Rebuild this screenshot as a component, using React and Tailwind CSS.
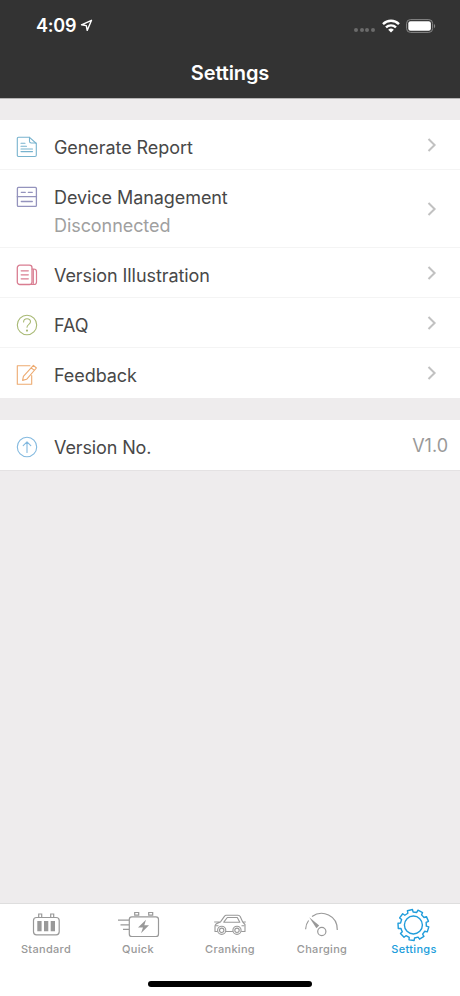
import React from "react";

const gearPath = (() => {
  const teeth = 9;
  const step = (Math.PI * 2) / teeth;
  const points = [];
  for (let i = 0; i < teeth; i++) {
    const a = i * step - Math.PI / 2 - 0.23;
    [
      [-0.3, 13],
      [-0.24, 15.5],
      [0.24, 15.5],
      [0.3, 13],
    ].forEach(([t, r]) => {
      const angle = a + t * step;
      points.push(
        `${(16.4 + r * Math.cos(angle)).toFixed(2)} ${(17 + r * Math.sin(angle)).toFixed(2)}`
      );
    });
  }
  return `M${points.join("L")}Z`;
})();

const RowIcon = ({ color, children }) => (
  <svg
    className="w-[22px] h-[22px] shrink-0"
    viewBox="0 0 22 22"
    fill="none"
    stroke={color}
    strokeWidth="1.1"
    strokeLinecap="round"
    strokeLinejoin="round"
  >
    {children}
  </svg>
);

const ReportIcon = () => (
  <RowIcon color="#78b3ce">
    <path d="M2.5 1.3H13.5L20.3 7.5V19.3Q20.3 20.5 19 20.5H2.5Q1.3 20.5 1.3 19.3V2.5Q1.3 1.3 2.5 1.3Z" />
    <path d="M13.5 1.3V5.3Q13.5 7 15.2 7H20M5 7.3H9M5 10.3H10.5M5 13H16.5M5 15.6H16.5" />
  </RowIcon>
);

const DeviceIcon = () => (
  <RowIcon color="#9493bd">
    <rect x="1.4" y="1.4" width="19" height="19" rx="1" strokeWidth="1.3" />
    <path d="M1.3 10.7H20.5M5.3 6.3H9.3M12.3 6.3H16.3M5.3 15.5H16.3" strokeWidth="1.3" />
  </RowIcon>
);

const VersionIcon = () => (
  <RowIcon color="#d97d91">
    <rect x="1.3" y="1.2" width="14.7" height="19.3" rx="2.6" strokeWidth="1.3" />
    <path d="M16 5H17.8Q20.5 5 20.5 7.7V18Q20.5 20.5 18 20.5H13.5M17.3 5V19.5" strokeWidth="1.2" />
    <path d="M5.2 6.8H12.3M5.2 10.8H12.3M5.2 14.8H12.3" strokeWidth="1.3" />
  </RowIcon>
);

const FaqIcon = () => (
  <RowIcon color="#a8b974">
    <circle cx="11" cy="11" r="9.7" />
    <path d="M7.6 8C7.6 5.7 9.1 4.7 11 4.7C13 4.7 14.5 5.8 14.5 7.8C14.5 10.4 11 10.3 11 13.3" />
    <circle cx="11" cy="16.6" r=".55" fill="#a8b974" />
  </RowIcon>
);

const FeedbackIcon = () => (
  <RowIcon color="#edaa70">
    <path d="M14 1.8H1.3V20.2H15.7V11.5" />
    <path d="M17.4 1.3L20.4 4L10.6 15.3L6.6 16.4L7.4 12.4ZM15.3 3.8L18.3 6.4" />
  </RowIcon>
);

const UpIcon = () => (
  <RowIcon color="#83b9df">
    <circle cx="11" cy="11" r="9.7" />
    <path d="M11 16.5V6M7.2 9.6L11 5.8L14.8 9.6" />
  </RowIcon>
);

const rows = [
  { label: "Generate Report", icon: ReportIcon },
  { label: "Device Management", icon: DeviceIcon, note: "Disconnected" },
  { label: "Version Illustration", icon: VersionIcon },
  { label: "FAQ", icon: FaqIcon },
  { label: "Feedback", icon: FeedbackIcon },
];

const StandardIcon = () => (
  <svg className="w-[44px] h-[34px]" viewBox="0 0 44 34" fill="none" stroke="#999" strokeWidth="1.2">
    <rect x="9.5" y="9.5" width="25.7" height="17.3" rx="3" />
    <path d="M14.7 9V6H17.7V9M26.7 9V6H29.7V9" />
    <path d="M13.3 13H17.6V23.3H13.3ZM20 13H24.3V23.3H20ZM26.7 13H31V23.3H26.7Z" fill="#999" stroke="none" />
  </svg>
);

const QuickIcon = () => (
  <svg className="w-[44px] h-[34px]" viewBox="0 0 44 34" fill="none" stroke="#999" strokeWidth="1.2">
    <rect x="13.3" y="8.8" width="29.2" height="19.7" rx="2.6" />
    <path d="M18.7 7.2V4.5H22.7V7.2ZM32.7 7.2V4.5H36.7V7.2ZM2 12.2H13M4.5 16.8H13M7 21.3H13" />
    <path d="M30 11.7L22 19.5H27L25 25.3L33 17.2H28.3Z" fill="#999" stroke="none" />
  </svg>
);

const CrankingIcon = () => (
  <svg className="w-[44px] h-[34px]" viewBox="0 0 44 34" fill="none" stroke="#999" strokeWidth="1.1" strokeLinejoin="round">
    <path d="M9.6 23.5H7V18.5Q7 16 9.5 15.2L12.5 13.9L16.4 8.4Q17 7.3 18.3 7.3H30Q31.5 7.3 32.2 8.6L34.8 14.2L37 16.5V23.5H33.2M17.9 23.5H24.9M6.2 14H12M34.5 14H37.8" />
    <path d="M15.8 14.2L19.3 9.5H29.3L31.8 14.2ZM7.5 17.8H10.5M33.5 17.8H36.5" />
    <circle cx="13.7" cy="22.3" r="4.1" />
    <circle cx="13.7" cy="22.3" r="2.2" />
    <circle cx="29" cy="22.3" r="4.1" />
    <circle cx="29" cy="22.3" r="2.2" />
  </svg>
);

const ChargingIcon = () => (
  <svg className="w-[44px] h-[34px]" viewBox="0 0 44 34" fill="none" stroke="#999" strokeWidth="1.2">
    <path d="M5.6 21.3C5.7 18 6.7 15 8.6 12.5M12 8.6C22 1.2 37.6 7.2 37.3 22" />
    <circle cx="21.8" cy="23.5" r="4.1" />
    <path d="M9.2 9.2L19.2 17.4L16.4 20.2Z" fill="#999" stroke="none" />
  </svg>
);

const GearIcon = () => (
  <svg className="w-[34px] h-[34px]" viewBox="0 0 34 34" fill="none" stroke="#209ddb" strokeWidth="1.4" strokeLinejoin="round">
    <path d={gearPath} />
    <circle cx="16.4" cy="17" r="9" />
  </svg>
);

const tabs = [
  { label: "Standard", icon: StandardIcon },
  { label: "Quick", icon: QuickIcon },
  { label: "Cranking", icon: CrankingIcon },
  { label: "Charging", icon: ChargingIcon },
  { label: "Settings", icon: GearIcon, active: true },
];

const StatusBar = () => (
  <div className="flex h-[50px] items-center justify-between pl-9 pr-[24px] pt-[1px]">
    <div className="flex items-center gap-[4px]">
      <span className="text-[18px] leading-[20px] pt-[1px] font-semibold tracking-[-0.2px]">4:09</span>
      <svg className="w-[13px] h-[13px]" viewBox="0 0 13 13" fill="none" stroke="white" strokeWidth="1.4" strokeLinejoin="round">
        <path d="M11.5 1.3L1.5 5.8L6.3 6.6L7.2 11.4Z" />
      </svg>
    </div>
    <div className="flex items-center">
      <div className="mr-[7px] mt-[9px] flex gap-[1.6px]">
        {[0, 1, 2, 3].map((dot) => (
          <span key={dot} className="h-[4px] w-[4px] rounded-full bg-[#6b6b6b]" />
        ))}
      </div>
      <svg className="mr-[6px] w-[18px] h-[14px]" viewBox="0 0 18 14" fill="none" stroke="white" strokeWidth="2.4">
        <path d="M1 5.1C5.5.7 12.5.7 17 5.1M4 8.4C6.8 5.7 11.2 5.7 14 8.4" />
        <path d="M6.2 10.7Q9 8.3 11.8 10.7L9 13.6Z" fill="white" stroke="none" />
      </svg>
      <svg className="w-[30px] h-[14px]" viewBox="0 0 30 14" fill="none">
        <rect x=".6" y=".6" width="26" height="12.8" rx="3.8" stroke="#888" />
        <rect x="2.3" y="2.3" width="22.6" height="9.4" rx="2.2" fill="white" />
        <path d="M28 4.7Q30.4 7 28 9.3Z" fill="#888" />
      </svg>
    </div>
  </div>
);

export default function App() {
  return (
    <div className="flex h-[996px] w-[460px] flex-col overflow-hidden bg-[#eeeced] font-[Inter,sans-serif]">
      <header className="h-[99px] shrink-0 border-b border-[#b5b4b4] bg-[#333] text-white">
        <StatusBar />
        <h1 className="text-center text-[20px] leading-[47px] font-semibold tracking-[-0.1px]">
          Settings
        </h1>
      </header>

      <main className="flex-1 pt-[21px]">
        <section className="bg-white">
          {rows.map(({ label, icon: Icon, note }, i) => (
            <div
              key={label}
              className={`flex pl-4 pr-[23px] pt-4 ${note ? "h-[78px]" : "h-[50px]"} ${
                i < rows.length - 1 ? "border-b border-[#f4f4f4]" : ""
              }`}
            >
              <Icon />
              <div className="ml-4 flex-1 text-[18px] leading-[28px] tracking-[-0.07px] -mt-[2px] text-[#484848]">
                <p>{label}</p>
                {note && <p className="text-[#a0a0a0]">{note}</p>}
              </div>
              <svg
                className={`w-[10px] h-[16px] ${note ? "mt-[15px]" : "mt-[1px]"}`}
                viewBox="0 0 10 16"
                fill="none"
                stroke="#c1c1c1"
                strokeWidth="2"
              >
                <path d="M1.5 2L7.6 8L1.5 14" />
              </svg>
            </div>
          ))}
        </section>

        <section className="mt-[22px] flex h-[51px] border-b border-[#e4e2e3] bg-white pl-4 pr-3 pt-4">
          <UpIcon />
          <p className="ml-4 -mt-[2px] flex-1 text-[18px] leading-[28px] tracking-[-0.12px] text-[#484848]">
            Version No.
          </p>
          <p className="-mt-[4px] text-[18px] leading-[28px] text-[#999]">V1.0</p>
        </section>
      </main>

      <footer className="flex h-[93px] shrink-0 flex-col border-t border-[#dedede] bg-white">
        <nav className="grid grid-cols-5">
          {tabs.map(({ label, icon: Icon, active }) => (
            <div key={label} className="flex flex-col items-center pt-[4px]">
              <Icon />
              <span
                className={`-mt-px text-[11px] leading-[16px] font-medium tracking-[0.3px] ${
                  active ? "text-[#209ddb]" : "text-[#999]"
                }`}
              >
                {label}
              </span>
            </div>
          ))}
        </nav>
        <div className="mx-auto mt-auto mb-[9px] h-[6px] w-[164px] rounded-full bg-black" />
      </footer>
    </div>
  );
}
